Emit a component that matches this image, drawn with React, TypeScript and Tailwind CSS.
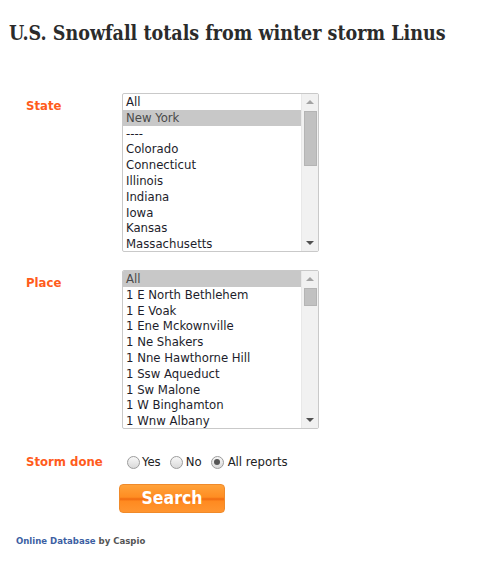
import React from "react";

const UI = '"DejaVu Sans Condensed", "DejaVu Sans", sans-serif';
const SERIF = '"DejaVu Serif Condensed", "DejaVu Serif", serif';

function Listbox({ items, selected, thumbTop, thumbH }: { items: string[]; selected: number; thumbTop: number; thumbH: number }) {
  return (
    <div className="flex w-[197px] h-[159px] border border-[#c9c9c9] rounded-[2px] bg-white overflow-hidden">
      <div className="flex-1 flex flex-col overflow-hidden">
        {items.map((t, i) => (
          <div
            key={i}
            className={
              "h-[15.8px] shrink-0 pl-[3px] leading-[15.8px] text-[13px] whitespace-nowrap " +
              (i === selected ? "bg-[#c8c8c8] text-[#4a4a4a]" : "text-[#1d1d2b]")
            }
          >
            {t}
          </div>
        ))}
      </div>
      <div className="w-[17px] bg-[#f1f1f1] border-l border-[#e8e8e8] flex flex-col items-center">
        <div className="h-[16px] flex items-center justify-center">
          <div className="w-0 h-0 border-l-[4px] border-r-[4px] border-b-[4px] border-l-transparent border-r-transparent border-b-[#a3a3a3]" />
        </div>
        <div className="w-[13px] bg-[#c1c1c1] border border-[#b4b4b4]" style={{ marginTop: thumbTop, height: thumbH }} />
        <div className="flex-1" />
        <div className="h-[16px] flex items-center justify-center">
          <div className="w-0 h-0 border-l-[4px] border-r-[4px] border-t-[4px] border-l-transparent border-r-transparent border-t-[#505050]" />
        </div>
      </div>
    </div>
  );
}

function Radio({ checked }: { checked?: boolean }) {
  return (
    <span className="inline-flex w-[13px] h-[13px] rounded-full border border-[#9c9c9c] bg-gradient-to-b from-[#f8f8f8] to-[#d9d9d9] items-center justify-center">
      {checked && <span className="w-[6px] h-[6px] rounded-full bg-[#555]" />}
    </span>
  );
}

export default function App() {
  const states = ["All", "New York", "----", "Colorado", "Connecticut", "Illinois", "Indiana", "Iowa", "Kansas", "Massachusetts"];
  const places = [
    "All",
    "1 E North Bethlehem",
    "1 E Voak",
    "1 Ene Mckownville",
    "1 Ne Shakers",
    "1 Nne Hawthorne Hill",
    "1 Ssw Aqueduct",
    "1 Sw Malone",
    "1 W Binghamton",
    "1 Wnw Albany",
  ];
  return (
    <div className="w-[500px] h-[571px] bg-white" style={{ fontFamily: UI }}>
      <h1 className="pt-[22px] pl-[9px] text-[19.5px] font-bold text-[#2b2b2b] leading-[24px]" style={{ fontFamily: SERIF }}>
        U.S. Snowfall totals from winter storm Linus
      </h1>
      <div className="mt-[47px]">
        <div className="flex">
          <div className="w-[122px] pl-[26px] pt-[3px] text-[13px] font-bold text-[#ff5c1c]">State</div>
          <Listbox items={states} selected={1} thumbTop={1} thumbH={55} />
        </div>
        <div className="flex mt-[18px]">
          <div className="w-[122px] pl-[26px] pt-[3px] text-[13px] font-bold text-[#ff5c1c]">Place</div>
          <Listbox items={places} selected={0} thumbTop={1} thumbH={18} />
        </div>
        <div className="flex items-center mt-[24px] h-[18px]">
          <div className="w-[122px] pl-[26px] text-[13px] font-bold text-[#ff5c1c]">Storm done</div>
          <div className="flex items-center text-[13px] text-[#222] pl-[5px]">
            <Radio />
            <span className="ml-[2px] mr-[9px]">Yes</span>
            <Radio />
            <span className="ml-[3px] mr-[9px]">No</span>
            <Radio checked />
            <span className="ml-[4px]">All reports</span>
          </div>
        </div>
        <div className="pl-[119px] mt-[13px]">
          <button
            className="w-[106px] h-[29px] rounded-[4px] border border-[#f08a2a] text-white font-bold text-[17.5px] leading-none"
            style={{ background: "linear-gradient(to bottom, #ffa23a 0%, #ff8d22 45%, #f06a10 52%, #ff8a20 60%, #ff9530 100%)" }}
          >
            Search
          </button>
        </div>
        <div className="pl-[16px] mt-[21px] text-[9.5px] font-bold">
          <span className="text-[#3d5fa3]">Online Database</span> <span className="text-[#555]">by Caspio</span>
        </div>
      </div>
    </div>
  );
}
